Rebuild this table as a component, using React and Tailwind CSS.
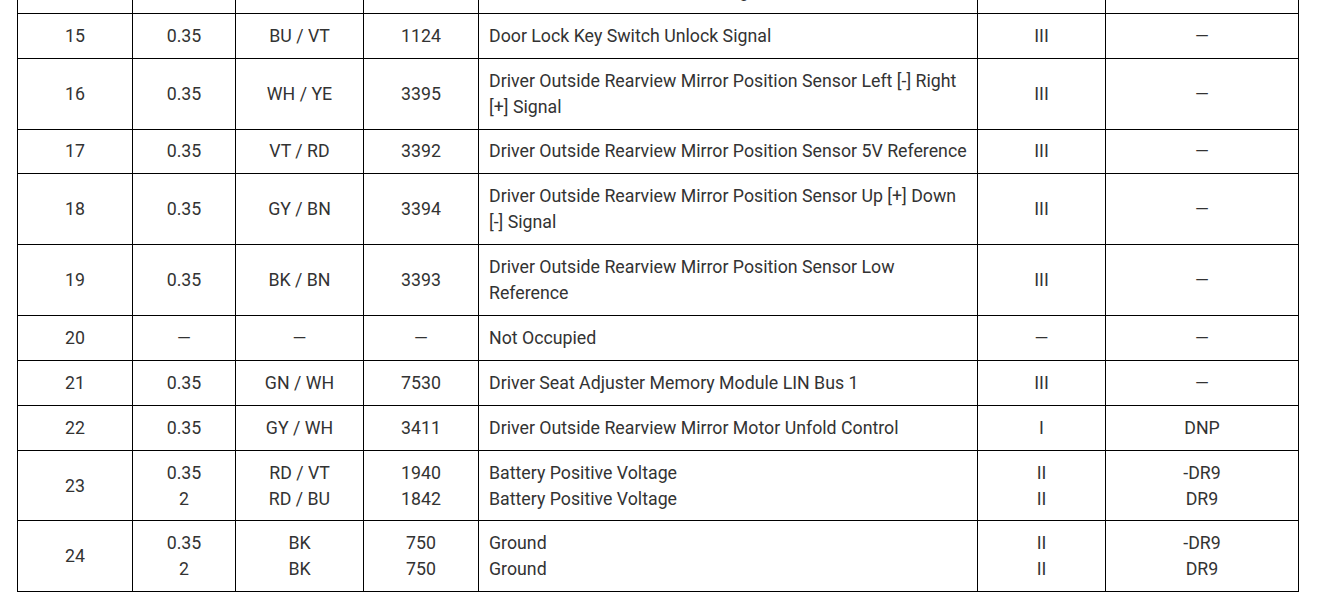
const rows = [
  { pin: "14", size: ["0.35"], color: ["BU / WH"], circuit: ["1123"], fn: ["Door Lock Aux Switch Unlock Signal"], opt: ["III"], note: ["—"] },
  { pin: "15", size: ["0.35"], color: ["BU / VT"], circuit: ["1124"], fn: ["Door Lock Key Switch Unlock Signal"], opt: ["III"], note: ["—"] },
  { pin: "16", size: ["0.35"], color: ["WH / YE"], circuit: ["3395"], fn: ["Driver Outside Rearview Mirror Position Sensor Left [-] Right [+] Signal"], opt: ["III"], note: ["—"] },
  { pin: "17", size: ["0.35"], color: ["VT / RD"], circuit: ["3392"], fn: ["Driver Outside Rearview Mirror Position Sensor 5V Reference"], opt: ["III"], note: ["—"] },
  { pin: "18", size: ["0.35"], color: ["GY / BN"], circuit: ["3394"], fn: ["Driver Outside Rearview Mirror Position Sensor Up [+] Down [-] Signal"], opt: ["III"], note: ["—"] },
  { pin: "19", size: ["0.35"], color: ["BK / BN"], circuit: ["3393"], fn: ["Driver Outside Rearview Mirror Position Sensor Low Reference"], opt: ["III"], note: ["—"] },
  { pin: "20", size: ["—"], color: ["—"], circuit: ["—"], fn: ["Not Occupied"], opt: ["—"], note: ["—"] },
  { pin: "21", size: ["0.35"], color: ["GN / WH"], circuit: ["7530"], fn: ["Driver Seat Adjuster Memory Module LIN Bus 1"], opt: ["III"], note: ["—"] },
  { pin: "22", size: ["0.35"], color: ["GY / WH"], circuit: ["3411"], fn: ["Driver Outside Rearview Mirror Motor Unfold Control"], opt: ["I"], note: ["DNP"] },
  { pin: "23", size: ["0.35", "2"], color: ["RD / VT", "RD / BU"], circuit: ["1940", "1842"], fn: ["Battery Positive Voltage", "Battery Positive Voltage"], opt: ["II", "II"], note: ["-DR9", "DR9"] },
  { pin: "24", size: ["0.35", "2"], color: ["BK", "BK"], circuit: ["750", "750"], fn: ["Ground", "Ground"], opt: ["II", "II"], note: ["-DR9", "DR9"] },
];

function Lines({ items }) {
  return items.map((t, i) => <div key={i}>{t}</div>);
}

export default function App() {
  const cell = "border border-black align-middle py-[8.93px] px-[10px]";
  return (
    <div
      className="w-[1323px] h-[607px] overflow-hidden bg-white text-[#333] text-[17.75px] leading-[26px]"
      style={{ fontFamily: "Roboto, 'Noto Sans', sans-serif" }}
    >
      {/* table continues from the previous page, so the first row is cut at the top */}
      <div className="pl-[17px] -mt-[32px]">
        <table className="table-fixed border-collapse w-[1281px]">
          <colgroup>
            <col className="w-[115px]" />
            <col className="w-[103px]" />
            <col className="w-[128px]" />
            <col className="w-[115px]" />
            <col className="w-[499px]" />
            <col className="w-[128px]" />
            <col className="w-[193px]" />
          </colgroup>
          <tbody>
            {rows.map((r) => (
              <tr key={r.pin}>
                <td className={`${cell} text-center`}>{r.pin}</td>
                <td className={`${cell} text-center`}><Lines items={r.size} /></td>
                <td className={`${cell} text-center`}><Lines items={r.color} /></td>
                <td className={`${cell} text-center`}><Lines items={r.circuit} /></td>
                <td className={`${cell} text-left`}><Lines items={r.fn} /></td>
                <td className={`${cell} text-center`}><Lines items={r.opt} /></td>
                <td className={`${cell} text-center`}><Lines items={r.note} /></td>
              </tr>
            ))}
          </tbody>
        </table>
      </div>
    </div>
  );
}
